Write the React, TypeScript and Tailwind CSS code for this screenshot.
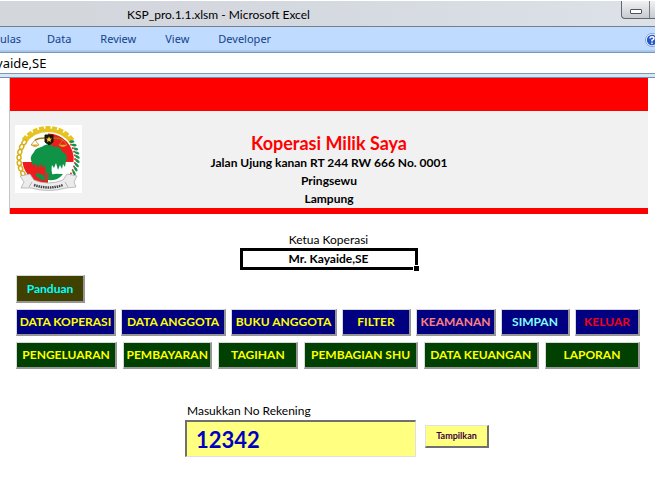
import { useState } from "react";

type Action = { label: string; color: string };

const tabs = ["Data", "Review", "View", "Developer"];

const primaryActions: Action[] = [
  { label: "DATA KOPERASI", color: "text-[#ffff00]" },
  { label: "DATA ANGGOTA", color: "text-[#ffff00]" },
  { label: "BUKU ANGGOTA", color: "text-[#ffff00]" },
  { label: "FILTER", color: "text-[#ffff00]" },
  { label: "KEAMANAN", color: "text-[#ff8080]" },
  { label: "SIMPAN", color: "text-[#80ffff]" },
  { label: "KELUAR", color: "text-[#f00010]" },
];

const reportActions = [
  "PENGELUARAN",
  "PEMBAYARAN",
  "TAGIHAN",
  "PEMBAGIAN SHU",
  "DATA KEUANGAN",
  "LAPORAN",
];

const raised =
  "flex items-center justify-center whitespace-nowrap border-t border-l border-r-2 border-b-2 border-t-[#d8d8d8] border-l-[#d8d8d8] border-r-[#969696] border-b-[#969696] font-bold";

function CooperativeLogo() {
  const gearTeeth = [-48, -36, -24, -12, 0, 12, 24, 36, 48];
  const chainLinks = [-120, -109, -98, -87, -76, -65, -55];
  const grains = [54, 62, 70, 78, 86, 94, 102, 110, 118];
  return (
    <svg viewBox="0 0 67 68" className="h-[68px] w-[67px] shrink-0 bg-white" role="img" aria-label="Koperasi Indonesia">
      <path d="M9 18 A29 29 0 0 1 57 18" fill="none" stroke="#e6c320" strokeWidth="3.500" />
      {gearTeeth.map((a) => (
        <rect key={a} x="30.5" y="1" width="5" height="4" fill="#e6c320" transform={`rotate(${a} 33 34)`} />
      ))}
      {chainLinks.map((a) => (
        <ellipse key={a} cx="33" cy="5" rx="2.600" ry="2" fill="white" stroke="#d8b01c" strokeWidth="1.500" transform={`rotate(${a} 33 34)`} />
      ))}
      {grains.map((a) => (
        <g key={a} transform={`rotate(${a} 33 34)`}>
          <ellipse cx="33" cy="4.500" rx="1.300" ry="2.600" fill="#16924a" transform="rotate(35 33 4.500)" />
          <circle cx="35" cy="7" r="1" fill="#e03434" />
        </g>
      ))}
      <circle cx="33" cy="34" r="25.500" fill="white" />
      <path d="M33 8.500 A25.500 25.500 0 0 1 58.500 37 H33Z" fill="#ee1c1c" />
      <path d="M7.500 37 H33 V59.500 A25.500 25.500 0 0 1 7.500 37Z" fill="#ee1c1c" />
      <path d="M16 35 C15 31 18 29 19 27 C21 22 26 23 28 21 C32 19 37 19 39 22 C44 21 47 24 47 27 C52 28 53 33 51 36 L50 42 L48 39 L47 44 L45 40 L43 45 L41 38 L39 43 L37 40 C36 46 37 49 39 53 H28 C30 49 31 45 30 40 L28 43 L26 38 L25 44 L23 39 L21 43 L20 38 L18 41Z" fill="#0f9447" />
      <path d="M20 49 C25 47 28 50 32 53 C37 47 43 49 48 49 C45 53 40 56 34 55 C27 56 23 54 20 49Z" fill="#0f9447" />
      <path d="M31 47 L34 50 L33 55 H30 L29 50Z" fill="#b3402e" />
      <path d="M20 15 C25 12 28 13 34 13 C40 13 43 12 48 15" fill="none" stroke="#a87a12" strokeWidth="1.500" />
      <path d="M20 15 L16 20 H24Z M48 15 L44 20 H52Z" fill="none" stroke="#c2931c" strokeWidth=".8" />
      <path d="M16 20 H24 Q20 24 16 20 M44 20 H52 Q48 24 44 20" fill="#d7aa22" />
      <path d="M30 10 H38 V17 L34 20 L30 17Z" fill="#1d1408" stroke="#1d1408" strokeWidth="1" />
      <path d="M34 11.500 L35 13.500 H37 L35.500 15 L36 17 L34 16 L32 17 L32.500 15 L31 13.500 H33Z" fill="#f5d33d" />
      <path d="M5 51 L15 49 L19 55 Q33 61 48 55 L52 49 L62 51 L59 57 L61 62 L51 63 Q34 68 16 63 L6 63 L9 57Z" fill="#ececec" stroke="#a5a5a5" strokeWidth=".7" />
      <path d="M17 57 L14 62 M50 57 L53 62" stroke="#a5a5a5" strokeWidth=".8" />
      <path d="M19 60 Q34 65 48 60" fill="none" stroke="#444" strokeWidth="2.500" strokeDasharray="1.500 .8" />
    </svg>
  );
}

export default function App() {
  const [account, setAccount] = useState("12342");

  return (
    <div className="w-full overflow-hidden bg-white font-['Lato','Liberation_Sans',sans-serif] text-black">
      <header className="font-['Noto_Sans','Liberation_Sans',sans-serif]">
        <div className="flex h-[27px] justify-between border-t border-b border-t-white border-b-[#777f88] bg-linear-to-r from-[#d3d7dc] via-[#d5d9e0] to-[#dce2e7]">
          <h1 className="pt-1 pl-[127px] font-['Lato','Liberation_Sans',sans-serif] text-[12px] leading-5 whitespace-nowrap">KSP_pro.1.1.xlsm - Microsoft Excel</h1>
          <div className="flex h-[18px] rounded-bl border-b border-l border-[#62676d] bg-linear-to-b from-[#f0f1f3] to-[#c7cbd0]">
            <button aria-label="Minimize" className="flex w-7 items-center justify-center border-r border-[#777d84] pt-1">
              <span className="h-[5px] w-3 rounded-[1px] border border-[#505560] bg-white" />
            </button>
            <button aria-label="Restore" className="w-[5px]" />
          </div>
        </div>
        <div className="flex h-[26px] items-center justify-between border-b border-[#7898bd] bg-linear-to-b from-[#bfdbff] from-90% to-[#a6c5e9] to-95%">
          <nav className="flex gap-[29px] text-[11px] text-[#15428b]">
            <button className="w-[18px] text-left">ulas</button>
            {tabs.map((tab) => (
              <button key={tab}>{tab}</button>
            ))}
          </nav>
          <button aria-label="Help" className="-mr-1 shrink-0">
            <svg viewBox="0 0 14 14" className="size-[14px]">
              <circle cx="7" cy="7" r="6.500" fill="white" stroke="#6d8cc0" strokeWidth=".8" />
              <circle cx="7" cy="7" r="5.200" fill="#1f55cf" />
              <path d="M5 5.500 Q5 3.700 7 3.700 Q9 3.700 9 5.200 Q9 6.400 7 7.300 V8.500 M7 9.500 V11" fill="none" stroke="white" strokeWidth="1.500" />
            </svg>
          </button>
        </div>
        <div className="-ml-1 h-5 text-[13px] leading-5">yaide,SE</div>
        <div className="h-[5px] border-t border-b border-t-[#8298b0] border-b-[#6f91b5] bg-[#d6e6f5]" />
      </header>

      <main>
        <section className="mr-[7px] ml-[9px]">
          <div className="border-l border-[#c5c5c5]">
            <div className="h-[33px] bg-[#ff0000]" />
            <div className="grid grid-cols-[67px_1fr_67px] border-b-6 border-[#ff0000] bg-[#f1f1f1] px-[5px]">
              <div className="pt-[14px]"><CooperativeLogo /></div>
              <div className="pt-[21px] text-center text-[12px] leading-[18px] font-bold">
                <h2 className="text-[18px] leading-[22px] text-[#ff0000]">Koperasi Milik Saya</h2>
                <p>Jalan Ujung kanan RT 244 RW 666 No. 0001</p>
                <p>Pringsewu</p>
                <p>Lampung</p>
              </div>
            </div>
          </div>
          <div className="flex flex-col items-center pt-[18px]">
            <p className="text-[12px] leading-4">Ketua Koperasi</p>
            <div className="relative h-[22px] w-[178px] border-3 border-black text-center text-[12px] leading-4 font-bold">
              Mr. Kayaide,SE
              <span className="absolute -right-1 -bottom-1 size-[6px] border-t border-l border-white bg-black" />
            </div>
          </div>
        </section>

        <div className="mr-[15px] ml-[16px] flex flex-col items-start gap-[6px] pt-[5px] text-[12px]">
          <button className={`${raised} h-[28px] w-[69px] bg-[#404000] text-[#00ffff]`}>Panduan</button>
          <div className="grid w-full grid-cols-[100fr_105fr_106fr_69fr_80fr_69fr_65fr] gap-[5px]">
            {primaryActions.map(({ label, color }) => (
              <button key={label} className={`${raised} h-[27px] bg-[#000080] ${color}`}>{label}</button>
            ))}
          </div>
          <div className="grid w-full grid-cols-[101fr_89fr_80fr_113fr_115fr_95fr] gap-[6px]">
            {reportActions.map((label) => (
              <button key={label} className={`${raised} h-[27px] bg-[#004000] text-[#ffff00]`}>{label}</button>
            ))}
          </div>
        </div>

        <form className="flex items-end gap-[9px] pt-[33px] pl-[185px]" onSubmit={(e) => e.preventDefault()}>
          <div className="flex flex-col">
            <label htmlFor="account" className="pl-[2px] text-[12px] leading-[18px]">Masukkan No Rekening</label>
            <input
              id="account"
              value={account}
              onChange={(e) => setAccount(e.target.value)}
              className="h-[37px] w-[231px] border-t-2 border-r border-b border-l-2 border-t-[#707070] border-r-[#e0e0e0] border-b-[#e0e0e0] border-l-[#707070] bg-[#ffff80] px-[9px] text-[22px] font-bold text-[#0000c0] outline-none"
            />
          </div>
          <button className="mb-[9px] h-[23px] w-[64px] border-t border-r-2 border-b-2 border-l border-t-[#e0e0e0] border-r-[#707070] border-b-[#707070] border-l-[#e0e0e0] bg-[#ffff80] text-[9px] font-bold text-[#400040]">
            Tampilkan
          </button>
        </form>
      </main>
    </div>
  );
}
